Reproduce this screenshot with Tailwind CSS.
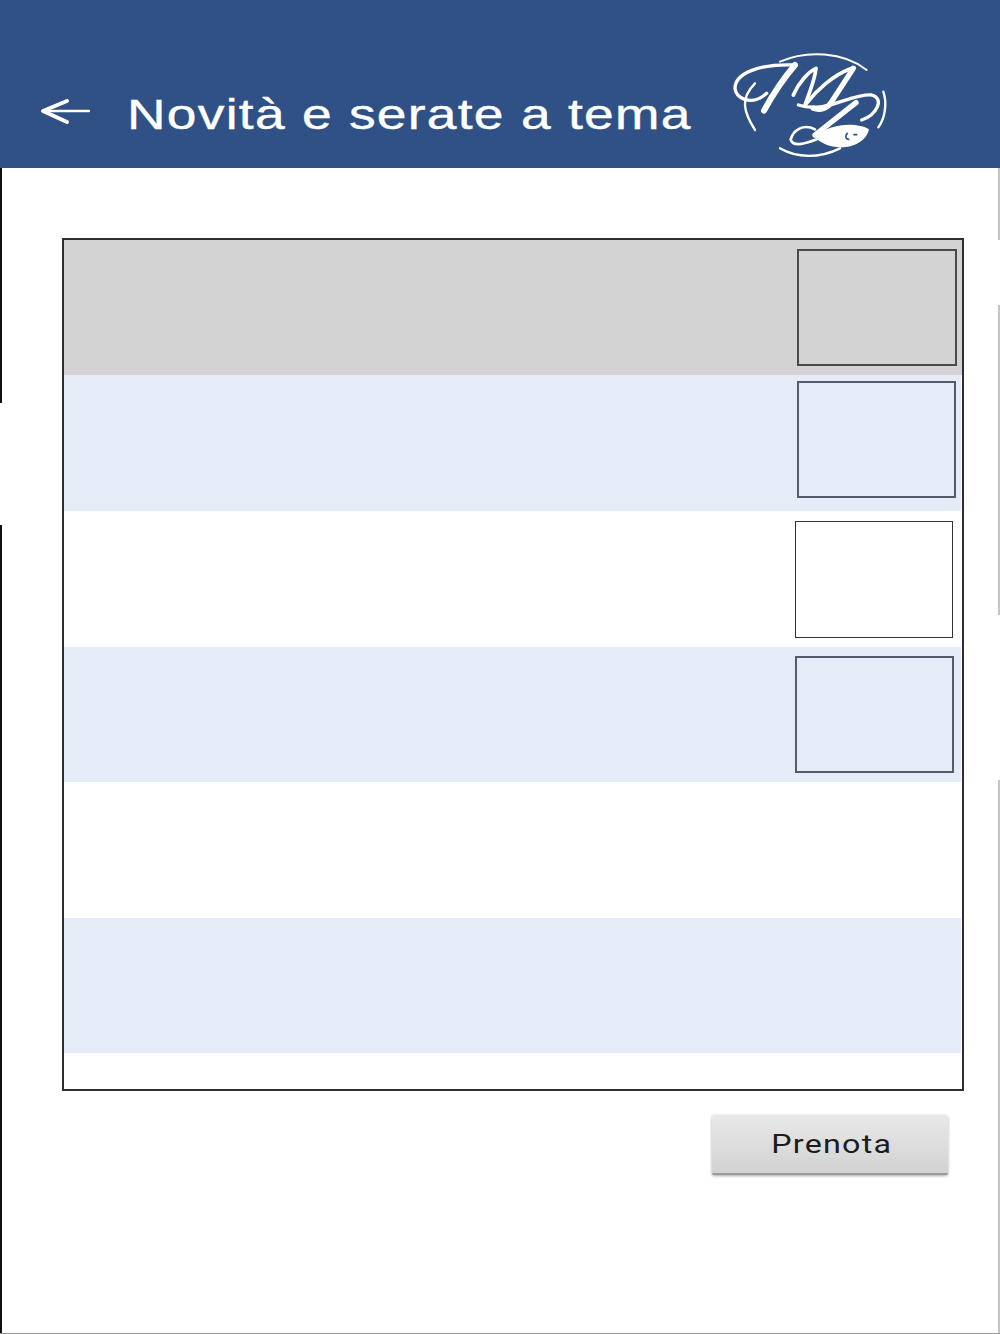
<!DOCTYPE html>
<html lang="en">
<head>
    <meta charset="UTF-8">
    <meta name="viewport" content="width=device-width, initial-scale=1.0">
    <title>Novità e serate a tema</title>
    <script src="https://cdn.jsdelivr.net/npm/@tailwindcss/browser@4"></script>
</head>
<body class="relative bg-white h-[1334px] w-[1000px] overflow-hidden font-['Liberation_Sans',sans-serif]">

    <!-- Header -->
    <header class="h-[168px] bg-[#2f5185] flex items-start">
        <svg class="ml-[40px] mt-[96px] w-[50px] h-[32px]" viewBox="0 0 50 32" fill="none" stroke="#ffffff" stroke-linecap="round" stroke-linejoin="round">
            <path d="M3 15H49" stroke-width="2.5"/>
            <path d="M27 5L3 15L27 26" stroke-width="4"/>
        </svg>
        <!-- the capture is stretched sideways, so the title is too -->
        <div class="ml-[37px] mt-[90px] w-[573px]">
            <h1 class="inline-block origin-left scale-x-[1.27] text-[42px] leading-[50px] tracking-[1px] whitespace-nowrap text-white [-webkit-text-stroke:0.4px_white]">Novità e serate a tema</h1>
        </div>
        <svg class="mt-[40px] w-[220px] h-[120px]" viewBox="0 0 660 360" fill="none" stroke="#ffffff" stroke-linecap="round" stroke-linejoin="round">
            <path d="M240 65C320 30 430 35 500 90" stroke-width="6"/>
            <path d="M165 270C130 215 120 175 165 130" stroke-width="7"/>
            <path d="M200 160C155 200 105 175 105 145C105 100 180 70 285 75" stroke-width="10"/>
            <path d="M285 75C255 110 220 160 192 212" stroke-width="18"/>
            <path d="M280 165C295 130 325 95 348 85C345 120 325 165 315 195" stroke-width="11"/>
            <path d="M318 192C350 150 400 105 455 85" stroke-width="11"/>
            <path d="M460 85L395 185C385 205 360 212 340 205" stroke-width="16"/>
            <path d="M468 188L345 285" stroke-width="16"/>
            <path d="M295 195C380 222 450 160 515 165C555 175 530 225 485 240" stroke-width="10"/>
            <path d="M550 155C562 190 555 235 535 262" stroke-width="7"/>
            <path d="M240 325C290 355 360 355 420 325" stroke-width="7"/>
            <path d="M345 268C310 250 280 270 272 298C278 322 315 312 350 298" stroke-width="8"/>
            <path d="M345 292C385 250 470 245 507 268C500 305 455 325 415 322C385 320 360 308 345 292Z" fill="#ffffff" stroke="none"/>
            <path d="M442 280C434 288 437 297 446 298M462 284H470" stroke="#2f5185" stroke-width="5"/>
        </svg>
    </header>

    <main class="pt-[70px] pl-[62px]">
        <!-- Table -->
        <div class="w-[902px] h-[853px] border-2 border-[#2e2e2e]">
            <div class="h-[135px] bg-[#d3d3d3] flex justify-end pt-[9px] pr-[5px]">
                <div class="w-[160px] h-[117px] border-2 border-[#4a4a4a]"></div>
            </div>
            <div class="h-[136px] bg-[#e6ecf7] flex justify-end pt-[6px] pr-[5px] mr-[1px]">
                <div class="w-[159px] h-[117px] border-2 border-[#555b6b]"></div>
            </div>
            <div class="h-[136px] bg-white flex justify-end pt-[10px] pr-[9px]">
                <div class="w-[158px] h-[117px] border-[1.5px] border-[#333333]"></div>
            </div>
            <div class="h-[135px] bg-[#e6ecf7] flex justify-end pt-[9px] pr-[7px] mr-[1px]">
                <div class="w-[159px] h-[117px] border-2 border-[#555b6b]"></div>
            </div>
            <div class="h-[136px] bg-white"></div>
            <div class="h-[135px] bg-[#e6ecf7] mr-[1px]"></div>
        </div>

        <div class="mt-[24px] pr-[52px] flex justify-end">
            <button class="w-[236px] h-[60px] rounded-[2px] bg-gradient-to-b from-[#e9e9e9] to-[#d2d2d2] border-b-2 border-b-[#9a9a9a] shadow-[0_1px_3px_rgba(0,0,0,0.35)] font-['Roboto',sans-serif] text-[26px] tracking-[1px] text-[#1c1c1c]">
                <span class="inline-block ml-[3px] scale-x-[1.24]">Prenota</span>
            </button>
        </div>
    </main>

    <!-- Bits of the screen edge left over in the capture -->
    <div class="absolute left-0 top-[168px] w-[2px] h-[235px] bg-[#111111]"></div>
    <div class="absolute left-0 top-[525px] w-[2px] h-[809px] bg-[#111111]"></div>
    <div class="absolute right-0 top-[168px] w-[2px] h-[72px] bg-[#c4c4c4]"></div>
    <div class="absolute right-0 top-[305px] w-[2px] h-[310px] bg-[#c4c4c4]"></div>
    <div class="absolute right-0 top-[780px] w-[2px] h-[554px] bg-[#c4c4c4]"></div>
    <div class="absolute left-0 bottom-0 w-full h-[1px] bg-[#9a9a9a]"></div>
</body>
</html>
